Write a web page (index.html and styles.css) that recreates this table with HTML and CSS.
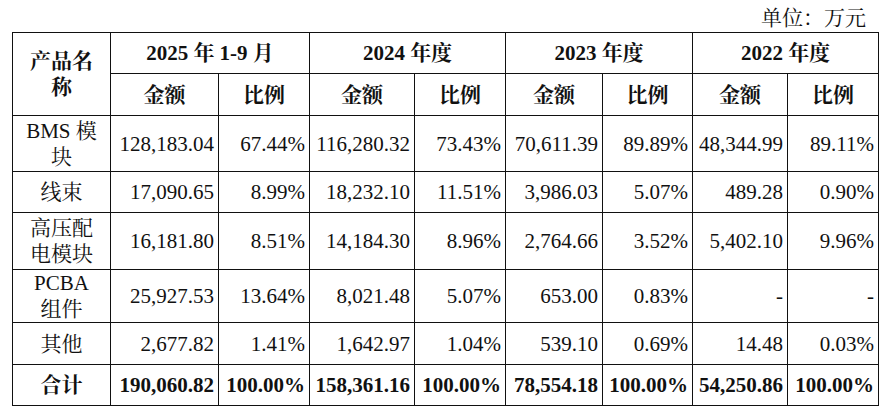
FILE: index.html
```html
<!DOCTYPE html>
<html lang="zh-CN">
<head>
<meta charset="utf-8">
<title>产品收入构成</title>
<link rel="stylesheet" href="styles.css">
</head>
<body>
<div class="page">
  <div class="unit">单位：万元</div>
  <table class="data">
    <colgroup>
      <col class="c-name">
      <col class="c-a1"><col class="c-b1">
      <col class="c-a2"><col class="c-b2">
      <col class="c-a3"><col class="c-b3">
      <col class="c-a4"><col class="c-b4">
    </colgroup>
    <thead>
      <tr class="h1">
        <th rowspan="2" class="name">产品名<br>称</th>
        <th colspan="2">2025 年 1-9 月</th>
        <th colspan="2">2024 年度</th>
        <th colspan="2">2023 年度</th>
        <th colspan="2">2022 年度</th>
      </tr>
      <tr class="h2">
        <th>金额</th><th>比例</th>
        <th>金额</th><th>比例</th>
        <th>金额</th><th>比例</th>
        <th>金额</th><th>比例</th>
      </tr>
    </thead>
    <tbody>
      <tr class="r-bms">
        <td class="name">BMS 模<br>块</td>
        <td>128,183.04</td><td>67.44%</td>
        <td>116,280.32</td><td>73.43%</td>
        <td>70,611.39</td><td>89.89%</td>
        <td>48,344.99</td><td>89.11%</td>
      </tr>
      <tr class="r-wire">
        <td class="name">线束</td>
        <td>17,090.65</td><td>8.99%</td>
        <td>18,232.10</td><td>11.51%</td>
        <td>3,986.03</td><td>5.07%</td>
        <td>489.28</td><td>0.90%</td>
      </tr>
      <tr class="r-hv">
        <td class="name">高压配<br>电模块</td>
        <td>16,181.80</td><td>8.51%</td>
        <td>14,184.30</td><td>8.96%</td>
        <td>2,764.66</td><td>3.52%</td>
        <td>5,402.10</td><td>9.96%</td>
      </tr>
      <tr class="r-pcba">
        <td class="name">PCBA<br>组件</td>
        <td>25,927.53</td><td>13.64%</td>
        <td>8,021.48</td><td>5.07%</td>
        <td>653.00</td><td>0.83%</td>
        <td>-</td><td>-</td>
      </tr>
      <tr class="r-other">
        <td class="name">其他</td>
        <td>2,677.82</td><td>1.41%</td>
        <td>1,642.97</td><td>1.04%</td>
        <td>539.10</td><td>0.69%</td>
        <td>14.48</td><td>0.03%</td>
      </tr>
      <tr class="r-total">
        <td class="name">合计</td>
        <td>190,060.82</td><td>100.00%</td>
        <td>158,361.16</td><td>100.00%</td>
        <td>78,554.18</td><td>100.00%</td>
        <td>54,250.86</td><td>100.00%</td>
      </tr>
    </tbody>
  </table>
</div>
</body>
</html>
```

FILE: styles.css
```css
html, body {
  margin: 0;
  padding: 0;
  background: #fff;
}

body {
  font-family: "Liberation Serif", "Noto Serif CJK SC", "Noto Sans CJK SC", serif;
  font-size: 21px;
  color: #111;
}

.page {
  padding: 0 8px 0 12px;
}

.unit {
  box-sizing: border-box;
  height: 32px;
  padding: 6px 12px 0 0;
  line-height: 24px;
  text-align: right;
}

.data {
  border-collapse: collapse;
  table-layout: fixed;
  width: 866px;
}

.data th,
.data td {
  border: 1px solid #111;
  padding: 0 4px;
  line-height: 26px;
  vertical-align: middle;
  white-space: nowrap;
  overflow: hidden;
}

.data th {
  font-weight: bold;
  text-align: center;
}

.data td {
  text-align: right;
}

.data td.name {
  text-align: center;
}

.c-name { width: 98px; }
.c-a1 { width: 108px; }
.c-b1 { width: 91px; }
.c-a2 { width: 105px; }
.c-b2 { width: 91px; }
.c-a3 { width: 97px; }
.c-b3 { width: 90px; }
.c-a4 { width: 95px; }
.c-b4 { width: 91px; }

.h1 { height: 41px; }
.h2 { height: 42px; }
.r-bms { height: 56px; }
.r-wire { height: 41px; }
.r-hv { height: 57px; }
.r-pcba { height: 52px; }
.r-other { height: 42px; }
.r-total { height: 41px; }

.r-total td {
  font-weight: bold;
}
```
